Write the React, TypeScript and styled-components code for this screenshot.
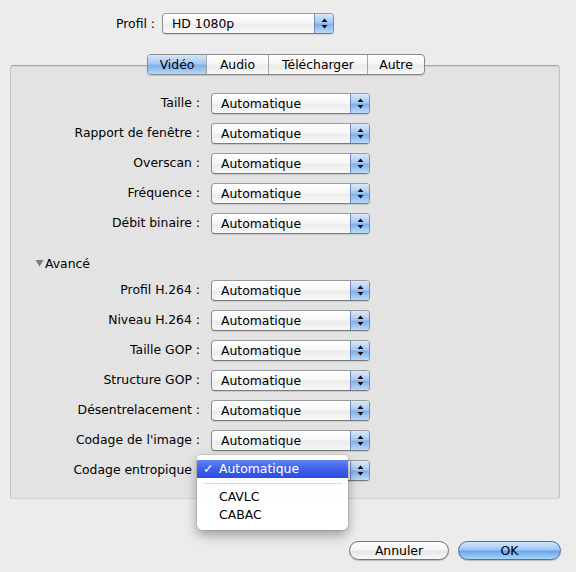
import React from "react";
import styled, { createGlobalStyle, css } from "styled-components";

const Global = createGlobalStyle`
  html, body { margin: 0; padding: 0; background: #ececec; }
  body { font-family: "DejaVu Sans", "Liberation Sans", sans-serif; }
`;

const Page = styled.div`
  width: 576px;
  height: 572px;
  background: #ececec;
  font-size: 12.4px;
  color: #000;
  overflow: hidden;
`;

const TopRow = styled.div`
  display: grid;
  grid-template-columns: 155px 172px;
  column-gap: 7px;
  align-items: center;
  padding-top: 13px;
`;

const Label = styled.div`
  text-align: right;
  white-space: nowrap;
  line-height: 16px;
`;

const SelectBox = styled.div<{ $w: number }>`
  position: relative;
  box-sizing: border-box;
  width: ${(p) => p.$w}px;
  height: 21px;
  display: flex;
  align-items: stretch;
  border: 1px solid #8c8c8c;
  border-top-color: #9a9a9a;
  border-bottom-color: #7a7a7a;
  border-radius: 4px;
  background: linear-gradient(#ffffff 0%, #f7f7f7 45%, #ececec 55%, #f8f8f8 100%);
  box-shadow: 0 1px 1px rgba(0, 0, 0, 0.12);
  overflow: hidden;
`;

const SelectValue = styled.div`
  flex: 1;
  padding-left: 9px;
  line-height: 19px;
  white-space: nowrap;
`;

const ArrowCap = styled.div`
  width: 18px;
  border-left: 1px solid #6c8cc0;
  background: linear-gradient(#d9e8fb 0%, #a9c9f3 45%, #83b0ec 55%, #b9daf9 100%);
  display: flex;
  align-items: center;
  justify-content: center;
`;

const Arrows = () => (
  <svg width="7" height="11" viewBox="0 0 7 11">
    <polygon points="3.5,0.5 6.5,4 0.5,4" fill="#111" />
    <polygon points="0.5,7 6.5,7 3.5,10.5" fill="#111" />
  </svg>
);

const Select = ({ value, w }: { value: string; w: number }) => (
  <SelectBox $w={w}>
    <SelectValue>{value}</SelectValue>
    <ArrowCap>
      <Arrows />
    </ArrowCap>
  </SelectBox>
);

const Panel = styled.div`
  box-sizing: border-box;
  width: 550px;
  margin: 31px 0 0 10px;
  background: #e3e3e3;
  border: 1px solid #c3c3c3;
  border-top-color: #a6a6a6;
  border-bottom-color: #d2d2d2;
  border-radius: 3px;
  box-shadow: inset 0 1px 1px rgba(0, 0, 0, 0.08);
  padding-bottom: 13px;
`;

const TabBar = styled.div`
  display: flex;
  justify-content: center;
  margin-top: -12px;
  padding-left: 2px;
`;

const Segmented = styled.div`
  display: flex;
  height: 21px;
  box-sizing: border-box;
  border: 1px solid #8a8a8a;
  border-radius: 4px;
  overflow: hidden;
  box-shadow: 0 1px 1px rgba(0, 0, 0, 0.15);
  background: linear-gradient(#ffffff 0%, #f6f6f6 45%, #ebebeb 55%, #f7f7f7 100%);
`;

const Tab = styled.div<{ $w: number; $active?: boolean }>`
  width: ${(p) => p.$w}px;
  text-align: center;
  line-height: 19px;
  white-space: nowrap;
  & + & {
    border-left: 1px solid #a4a4a4;
  }
  ${(p) =>
    p.$active &&
    css`
      background: linear-gradient(#d4e5fa 0%, #a6c8f2 45%, #7fafee 55%, #b5d7fa 100%);
    `}
`;

const FieldList = styled.div<{ $top: number }>`
  display: grid;
  grid-template-columns: 189px 159px;
  column-gap: 11px;
  grid-auto-rows: 30px;
  align-items: center;
  margin-top: ${(p) => p.$top}px;
`;

const Cell = styled.div`
  position: relative;
`;

const Disclosure = styled.div`
  display: flex;
  align-items: center;
  height: 16px;
  margin-top: 17px;
  padding-left: 24px;
  gap: 1px;
`;

const Menu = styled.div`
  position: absolute;
  left: -14px;
  top: -5px;
  width: 151px;
  box-sizing: border-box;
  padding: 5px 0 6px;
  background: rgba(255, 255, 255, 0.97);
  border-radius: 4px 4px 6px 6px;
  box-shadow: 0 5px 12px rgba(0, 0, 0, 0.35), 0 0 0 1px rgba(0, 0, 0, 0.08);
  z-index: 2;
`;

const MenuItem = styled.div<{ $active?: boolean }>`
  position: relative;
  height: 18px;
  line-height: 18px;
  padding-left: 22px;
  white-space: nowrap;
  ${(p) =>
    p.$active &&
    css`
      color: #fff;
      background: linear-gradient(#6383f2 0%, #3e61ea 50%, #2a4de2 100%);
    `}
`;

const Check = styled.span`
  position: absolute;
  left: 6px;
  top: 0;
  font-weight: bold;
`;

const Separator = styled.div`
  height: 1px;
  margin: 5px 6px 4px;
  background: #dcdcdc;
`;

const ButtonRow = styled.div`
  display: flex;
  justify-content: flex-end;
  gap: 9px;
  padding-right: 15px;
  margin-top: 42px;
`;

const Button = styled.div<{ $w: number; $primary?: boolean }>`
  box-sizing: border-box;
  width: ${(p) => p.$w}px;
  height: 19px;
  border-radius: 10px;
  text-align: center;
  line-height: 17px;
  border: 1px solid #737373;
  background: linear-gradient(#ffffff 0%, #f5f5f5 45%, #e6e6e6 55%, #f9f9f9 100%);
  box-shadow: 0 1px 1px rgba(0, 0, 0, 0.2);
  ${(p) =>
    p.$primary &&
    css`
      border-color: #4d6ea6;
      background: linear-gradient(#d2e6fb 0%, #9cc6f4 45%, #6aa6ec 55%, #a9d6fb 100%);
    `}
`;

const basic = ["Taille :", "Rapport de fenêtre :", "Overscan :", "Fréquence :", "Débit binaire :"];
const advanced = [
  "Profil H.264 :",
  "Niveau H.264 :",
  "Taille GOP :",
  "Structure GOP :",
  "Désentrelacement :",
  "Codage de l'image :",
];

const tabs = [
  { label: "Vidéo", w: 58, active: true },
  { label: "Audio", w: 61 },
  { label: "Télécharger", w: 98 },
  { label: "Autre", w: 56 },
];

export default function App() {
  return (
    <Page>
      <Global />
      <TopRow>
        <Label>Profil :</Label>
        <Select value="HD 1080p" w={172} />
      </TopRow>
      <Panel>
        <TabBar>
          <Segmented>
            {tabs.map((t) => (
              <Tab key={t.label} $w={t.w} $active={t.active}>
                {t.label}
              </Tab>
            ))}
          </Segmented>
        </TabBar>
        <FieldList $top={13}>
          {basic.map((l) => (
            <React.Fragment key={l}>
              <Label>{l}</Label>
              <Select value="Automatique" w={159} />
            </React.Fragment>
          ))}
        </FieldList>
        <Disclosure>
          <svg width="9" height="8" viewBox="0 0 9 8">
            <polygon points="0.5,1 8.5,1 4.5,7.5" fill="#7a7a7a" />
          </svg>
          <span>Avancé</span>
        </Disclosure>
        <FieldList $top={4}>
          {advanced.map((l) => (
            <React.Fragment key={l}>
              <Label>{l}</Label>
              <Select value="Automatique" w={159} />
            </React.Fragment>
          ))}
          <Label>Codage entropique :</Label>
          <Cell>
            <Select value="Automatique" w={159} />
            <Menu>
              <MenuItem $active>
                <Check>✓</Check>Automatique
              </MenuItem>
              <Separator />
              <MenuItem>CAVLC</MenuItem>
              <MenuItem>CABAC</MenuItem>
            </Menu>
          </Cell>
        </FieldList>
      </Panel>
      <ButtonRow>
        <Button $w={100}>Annuler</Button>
        <Button $w={103} $primary>
          OK
        </Button>
      </ButtonRow>
    </Page>
  );
}
